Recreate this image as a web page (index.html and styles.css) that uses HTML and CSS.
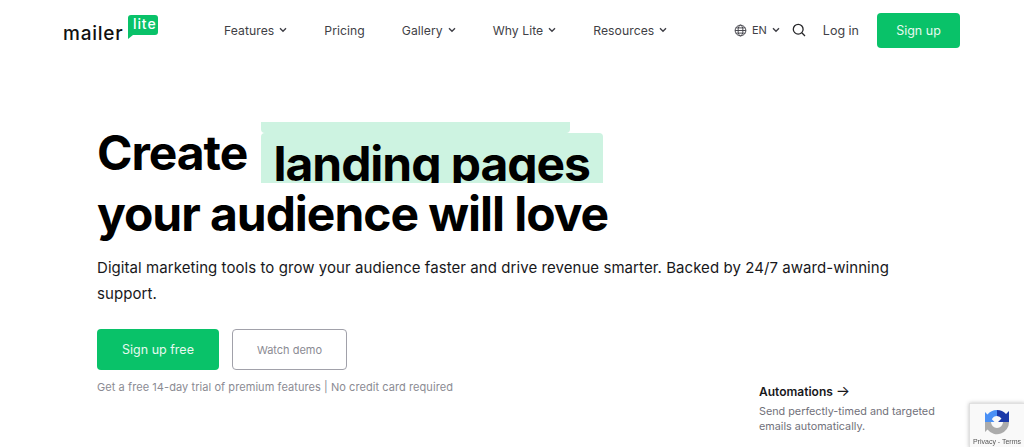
FILE: index.html
```html
<!DOCTYPE html>
<html>
<head>
    <title>MailerLite</title>
    <link rel="stylesheet" href="styles.css">
</head>
<body>
    <header class="site-header">
        <a class="logo" href="#">
            <span class="logo-word">mailer</span>
            <span class="logo-badge">lite</span>
        </a>
        <nav class="main-nav">
            <a class="nav-item" href="#">Features <svg class="chevron" viewBox="0 0 8 6"><path d="M1 1.2l3 3 3-3"/></svg></a>
            <a class="nav-item" href="#">Pricing</a>
            <a class="nav-item" href="#">Gallery <svg class="chevron" viewBox="0 0 8 6"><path d="M1 1.2l3 3 3-3"/></svg></a>
            <a class="nav-item" href="#">Why Lite <svg class="chevron" viewBox="0 0 8 6"><path d="M1 1.2l3 3 3-3"/></svg></a>
            <a class="nav-item" href="#">Resources <svg class="chevron" viewBox="0 0 8 6"><path d="M1 1.2l3 3 3-3"/></svg></a>
        </nav>
        <div class="header-actions">
            <a class="lang" href="#">
                <svg class="globe" viewBox="0 0 14 14"><circle cx="7" cy="7" r="5.8"/><ellipse cx="7" cy="7" rx="2.6" ry="5.8"/><path d="M1.2 7h11.6M2 4.2h10M2 9.8h10"/></svg>
                EN
                <svg class="chevron" viewBox="0 0 8 6"><path d="M1 1.2l3 3 3-3"/></svg>
            </a>
            <svg class="search" viewBox="0 0 14 14"><circle cx="6.2" cy="6.2" r="4.9"/><path d="M9.8 9.8l3.2 3.2"/></svg>
            <a class="login" href="#">Log in</a>
            <a class="btn btn-small" href="#">Sign up</a>
        </div>
    </header>

    <main class="hero">
        <h1 class="hero-title">
            <span class="title-line">Create <span class="rotator"><span class="rotator-tab"></span><span class="rotator-box"><span class="rotator-word">landing pages</span></span></span></span>
            <span class="title-line">your audience will love</span>
        </h1>
        <p class="hero-text">Digital marketing tools to grow your audience faster and drive revenue smarter. Backed by 24/7 award-winning support.</p>
        <div class="hero-bottom">
            <div class="hero-cta">
                <div class="hero-buttons">
                    <a class="btn btn-large" href="#">Sign up free</a>
                    <a class="btn-outline" href="#">Watch demo</a>
                </div>
                <p class="hero-note">Get a free 14-day trial of premium features | No credit card required</p>
            </div>
            <div class="feature">
                <h3 class="feature-title">Automations <span class="arrow">→</span></h3>
                <p class="feature-text">Send perfectly-timed and targeted emails automatically.</p>
            </div>
        </div>
    </main>

    <div class="recaptcha">
        <svg class="recaptcha-icon" viewBox="0 0 28 28">
            <path fill="#ababab" d="M2 14H8A6 6 0 0 0 20 14H26A12 12 0 0 1 4.5 21.5L2 24Z"/>
            <path fill="#4a90f5" d="M14 2A12 12 0 0 0 4.5 6.5L2 4V14H11.5L8.8 11.3A6 6 0 0 1 14 8Z"/>
            <path fill="#1c3aa9" d="M14 2A12 12 0 0 1 23 6L26 3V14H15L18.5 10.5A6.5 6.5 0 0 0 14 8Z"/>
        </svg>
        <div class="recaptcha-links">Privacy - Terms</div>
    </div>
</body>
</html>
```

FILE: styles.css
```css
html, body {
    height: 100%;
}
body {
    margin: 0;
    font-family: Inter, "Liberation Sans", sans-serif;
    background: #fff;
    color: #09090b;
    overflow: hidden;
}
a {
    text-decoration: none;
    color: inherit;
}

/* header */
.site-header {
    display: flex;
    align-items: center;
    height: 60px;
    padding: 0 64px 0 63px;
    color: #3f3f46;
}
.logo {
    display: flex;
    align-items: flex-start;
    width: 161px;
    height: 30px;
}
.logo-word {
    width: 65px;
    margin-top: 8px;
    font-size: 19px;
    font-weight: 500;
    line-height: 22px;
    letter-spacing: 0.75px;
    color: #111;
}
.logo-badge {
    position: relative;
    width: 30px;
    height: 20px;
    box-sizing: border-box;
    padding-left: 5px;
    background: #09c269;
    border-radius: 3px 3px 3px 0;
    color: #fff;
    font-size: 14px;
    font-weight: 500;
    line-height: 18px;
    letter-spacing: 0.9px;
}
.logo-badge::after {
    content: "";
    position: absolute;
    left: 0;
    top: 20px;
    border-left: 5px solid #09c269;
    border-bottom: 4px solid transparent;
}
.main-nav {
    display: flex;
    align-items: center;
    gap: 37px;
}
.nav-item {
    display: flex;
    align-items: center;
    gap: 5px;
    font-size: 12.2px;
    letter-spacing: 0.05px;
}
.chevron {
    width: 8px;
    height: 6px;
    fill: none;
    stroke: #3f3f46;
    stroke-width: 1.4;
}
.header-actions {
    display: flex;
    align-items: center;
    margin-left: auto;
}
.lang {
    display: flex;
    align-items: center;
    gap: 5px;
    font-size: 11px;
}
.globe {
    width: 13px;
    height: 13px;
    fill: none;
    stroke: #3f3f46;
    stroke-width: 1;
}
.search {
    width: 14px;
    height: 14px;
    margin-left: 12px;
    fill: none;
    stroke: #27272a;
    stroke-width: 1.3;
}
.login {
    margin-left: 17px;
    margin-right: 18px;
    font-size: 12.5px;
}
.btn {
    display: flex;
    align-items: center;
    justify-content: center;
    background: #09c269;
    color: #e6f9ef;
    border-radius: 4px;
}
.btn-small {
    width: 83px;
    height: 35px;
    font-size: 12.5px;
}

/* hero */
.hero {
    padding: 62px 0 0 97px;
}
.hero-title {
    margin: 0;
    font-size: 48px;
    font-weight: 700;
    line-height: 61px;
    letter-spacing: -1.05px;
    color: #000;
}
.title-line {
    display: flex;
    align-items: flex-start;
    white-space: pre;
}
.rotator {
    display: flex;
    flex-direction: column;
    margin-left: 3px;
}
.rotator-tab {
    display: block;
    width: 309px;
    height: 11px;
    background: #cdf3e1;
    border-radius: 0 0 4px 4px;
}
.rotator-box {
    display: block;
    width: 342px;
    height: 50px;
    overflow: hidden;
    background: #cdf3e1;
    border-radius: 4px 4px 0 0;
}
.rotator-word {
    display: block;
    margin-left: 13px;
    line-height: 61px;
}
.hero-text {
    width: 800px;
    margin: 11px 0 0;
    font-size: 15px;
    line-height: 26px;
    letter-spacing: 0.065px;
    color: #18181b;
}
.hero-bottom {
    display: flex;
    margin-top: 22px;
}
.hero-cta {
    width: 662px;
}
.hero-buttons {
    display: flex;
    gap: 13px;
}
.btn-large {
    width: 122px;
    height: 41px;
    font-size: 12.5px;
}
.btn-outline {
    display: flex;
    align-items: center;
    justify-content: center;
    width: 113px;
    height: 39px;
    border: 1px solid #a1a1aa;
    border-radius: 4px;
    font-size: 11px;
    color: #8b8b93;
}
.hero-note {
    margin: 10px 0 0;
    font-size: 11px;
    line-height: 14px;
    letter-spacing: 0.07px;
    color: #8b8b93;
}
.feature {
    width: 190px;
    margin-top: 55px;
}
.feature-title {
    margin: 0;
    font-size: 12px;
    font-weight: 600;
    line-height: 16px;
    color: #18181b;
}
.arrow {
    font-size: 15px;
    line-height: 14px;
    font-weight: 400;
}
.feature-text {
    margin: 4px 0 0;
    font-size: 10.8px;
    line-height: 15px;
    color: #71717a;
}

/* floats over the page corner */
.recaptcha {
    position: fixed;
    right: -1px;
    bottom: -1px;
    width: 54px;
    height: 43px;
    background: #f9f9f9;
    border: 1px solid #e0e0e0;
    box-shadow: 0 0 4px rgba(0,0,0,0.25);
    text-align: center;
}
.recaptcha-icon {
    display: block;
    width: 28px;
    height: 28px;
    margin: 4px auto 1px;
}
.recaptcha-links {
    font-family: "Liberation Sans", sans-serif;
    font-size: 7px;
    line-height: 9px;
    white-space: nowrap;
    color: #555;
}
```
